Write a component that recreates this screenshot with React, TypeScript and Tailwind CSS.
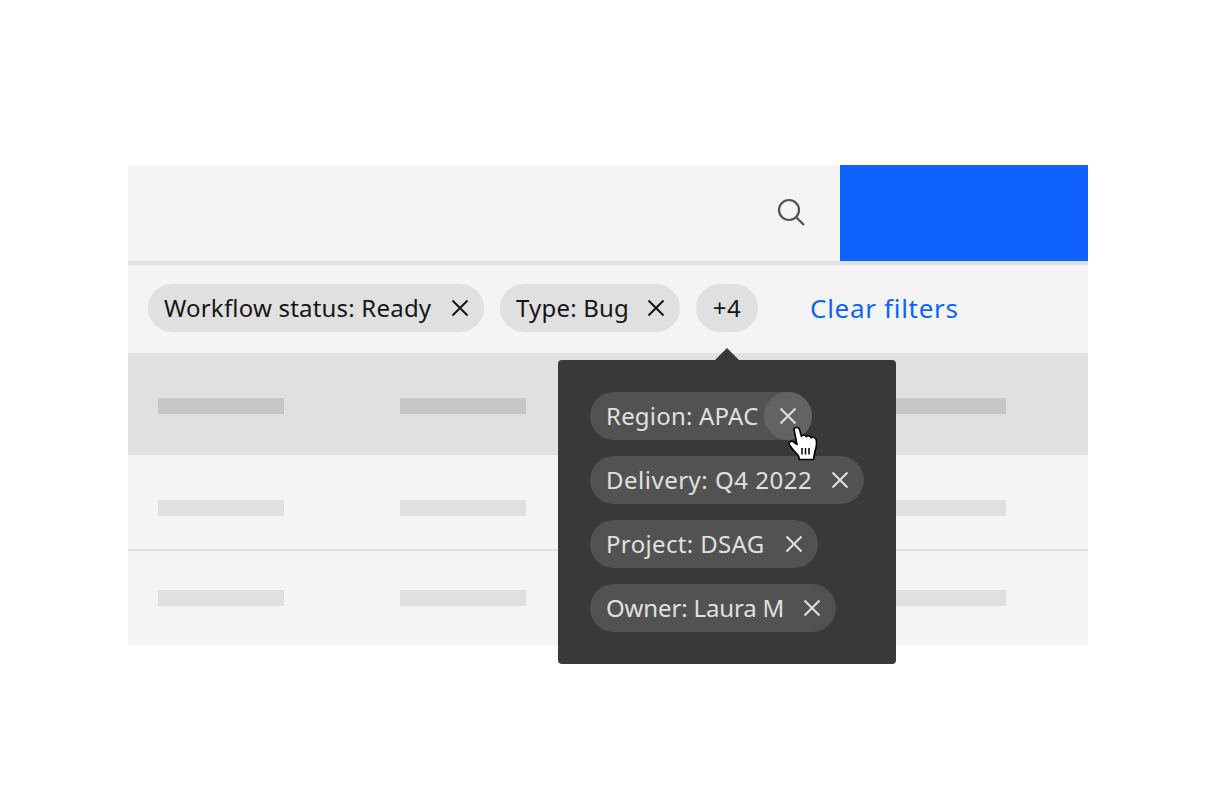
function Chip({ label, width, tracking, dark, hover }: { label: string; width: string; tracking: string; dark?: boolean; hover?: boolean }) {
  return (
    <div
      className={`flex h-12 items-center justify-between rounded-full pl-4 ${width} ${
        dark ? "bg-[#525252] text-[#e0e0e0]" : "bg-[#e0e0e0] text-[#161616]"
      }`}
    >
      <span className={`whitespace-nowrap pb-px text-[24px] leading-none ${tracking}`}>{label}</span>
      <span className={`flex h-12 w-12 items-center justify-center rounded-full ${hover ? "bg-[#636363]" : ""}`}>
        <svg width="24" height="24" viewBox="0 0 24 24" fill="none" stroke="currentColor" strokeWidth="2">
          <path d="M4.500 4.500 19.500 19.500M19.500 4.500 4.500 19.500" />
        </svg>
      </span>
    </div>
  );
}

function Row({ height, bar, bg, offset }: { height: string; bar: string; bg: string; offset: string }) {
  return (
    <div className={`flex items-center pl-[30px] ${height} ${bg} ${offset}`}>
      <div className={`h-4 w-[126px] ${bar}`} />
      <div className={`ml-[116px] h-4 w-[126px] ${bar}`} />
      <div className={`ml-[354px] h-4 w-[126px] ${bar}`} />
    </div>
  );
}

export default function App() {
  return (
    <div className="h-[810px] w-[1216px] bg-white pl-[128px] pt-[165px] font-['Noto_Sans',sans-serif]">
      <div className="relative w-[960px]">
        <div className="flex h-[96px] bg-[#f4f4f4]">
          <div className="flex flex-1 items-center justify-end pb-0.5 pr-[34px]">
            <svg width="30" height="30" viewBox="0 0 30 30" fill="none" stroke="#525252" strokeWidth="2.2">
              <circle cx="13" cy="13" r="10" />
              <path d="M20.500 20.500 28 28" />
            </svg>
          </div>
          <div className="w-[248px] bg-[#0f62fe]" />
        </div>
        <div className="h-1 bg-[#e0e0e0]" />
        <div className="flex h-[88px] items-center gap-4 bg-[#f4f4f4] pb-0.5 pl-5">
          <Chip label="Workflow status: Ready" width="w-[336px]" tracking="tracking-[0.2px]" />
          <Chip label="Type: Bug" width="w-[180px]" tracking="tracking-[0.2px]" />
          <div className="flex h-12 w-[62px] items-center justify-center rounded-full bg-[#e0e0e0] pb-px text-[24px] leading-none tracking-[0.5px] text-[#161616]">
            +4
          </div>
          <a className="ml-9 pb-px text-[26px] leading-none tracking-[0.7px] text-[#0f62fe]">Clear filters</a>
        </div>
        <Row height="h-[102px]" bg="bg-[#e0e0e0]" bar="bg-[#c6c6c6]" offset="pt-1" />
        <Row height="h-[94px]" bg="bg-[#f4f4f4]" bar="bg-[#e0e0e0]" offset="pt-3" />
        <div className="h-0.5 bg-[#e0e0e0]" />
        <Row height="h-[94px]" bg="bg-[#f4f4f4]" bar="bg-[#e0e0e0]" offset="" />

        <div className="absolute left-[430px] top-[195px] flex h-[304px] w-[338px] flex-col items-start gap-4 rounded-[4px] bg-[#393939] pl-8 pt-8">
          <div className="absolute left-[157px] top-[-12px] h-0 w-0 border-x-[12px] border-b-[12px] border-x-transparent border-b-[#393939]" />
          <Chip label="Region: APAC" width="w-[222px]" tracking="tracking-[0.2px]" dark hover />
          <Chip label="Delivery: Q4 2022" width="w-[274px]" tracking="tracking-[0.5px]" dark />
          <Chip label="Project: DSAG" width="w-[228px]" tracking="tracking-[0.35px]" dark />
          <Chip label="Owner: Laura M" width="w-[246px]" tracking="tracking-[-0.15px]" dark />
          <svg className="absolute left-[230px] top-[66px]" width="30" height="36" viewBox="0 0 30 36">
            <path
              d="M6 3.500C6 .8 11 .8 11.500 3.500L13.500 10.500C14.500 8.500 17.500 8.500 18.300 10.800C19.500 9.200 22.500 9.500 23.200 11.800C24.800 10.700 28 11.500 28.300 14.500C28.800 18 28.500 21.500 27 25L25.500 33.500L11.500 33.500L10.500 30C8 26.500 4 23.500 1.500 19C.2 16.500 3 14 5.500 15.800L9 18.500Z"
              fill="#fff"
              stroke="#000"
              strokeWidth="1.600"
              strokeLinejoin="round"
            />
            <path d="M14 22v6.500M17.500 22v6.500M21 22v6.500" stroke="#000" strokeWidth="1.500" />
          </svg>
        </div>
      </div>
    </div>
  );
}
